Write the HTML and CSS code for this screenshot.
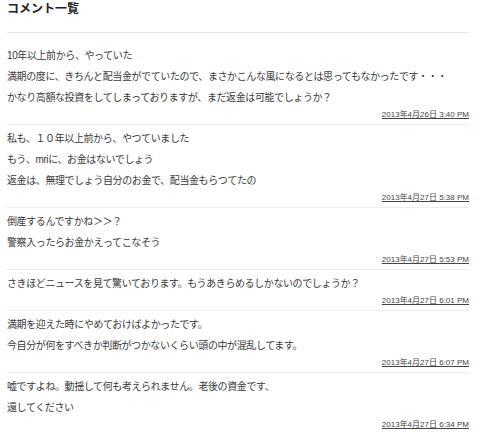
FILE: index.html
```html
<!DOCTYPE html>
<html lang="ja">

<head>
    <meta charset="UTF-8">
    <meta name="viewport" content="width=device-width, initial-scale=1.0">
    <title>コメント一覧</title>
    <link rel="stylesheet" href="styles.css">
</head>

<body>
    <div class="comments">
        <h3 class="comments-title">コメント一覧</h3>

        <div class="comment-list">
            <div class="comment">
                <p>10年以上前から、やっていた<br>
                    満期の度に、きちんと配当金がでていたので、まさかこんな風になるとは思ってもなかったです・・・<br>
                    かなり高額な投資をしてしまっておりますが、まだ返金は可能でしょうか？</p>
                <div class="comment-date"><a href="#">2013年4月26日 3:40 PM</a></div>
            </div>

            <div class="comment">
                <p>私も、１０年以上前から、やつていました<br>
                    もう、mriに、お金はないでしょう<br>
                    返金は、無理でしょう自分のお金で、配当金もらつてたの</p>
                <div class="comment-date"><a href="#">2013年4月27日 5:38 PM</a></div>
            </div>

            <div class="comment">
                <p>倒産するんですかね＞＞？<br>
                    警察入ったらお金かえってこなそう</p>
                <div class="comment-date"><a href="#">2013年4月27日 5:53 PM</a></div>
            </div>

            <div class="comment">
                <p>さきほどニュースを見て驚いております。もうあきらめるしかないのでしょうか？</p>
                <div class="comment-date"><a href="#">2013年4月27日 6:01 PM</a></div>
            </div>

            <div class="comment">
                <p>満期を迎えた時にやめておけばよかったです。<br>
                    今自分が何をすべきか判断がつかないくらい頭の中が混乱してます。</p>
                <div class="comment-date"><a href="#">2013年4月27日 6:07 PM</a></div>
            </div>

            <div class="comment">
                <p>嘘ですよね。動揺して何も考えられません。老後の資金です、<br>
                    還してください</p>
                <div class="comment-date"><a href="#">2013年4月27日 6:34 PM</a></div>
            </div>
        </div>
    </div>
</body>

</html>
```

FILE: styles.css
```css
body {
    margin: 0;
    padding: 0;
    background-color: #fff;
    font-family: "Liberation Sans", Arial, "Noto Sans CJK JP", sans-serif;
    color: #3a3a3a;
}

.comments {
    width: 462px;
    padding: 0 11px 0 7px;
}

.comments-title {
    margin: 0;
    padding: 3px 0 16px 0;
    font-size: 12px;
    line-height: 13px;
    font-weight: bold;
    color: #222;
    border-bottom: 1px solid #e8e8e8;
}

.comment-list {
    margin-top: 9px;
}

.comment {
    padding: 3px 0 3px 0;
    border-bottom: 1px solid #ececec;
}

.comment p {
    margin: 0;
    font-size: 10px;
    line-height: 21px;
    letter-spacing: -0.4px;
}

.comment-date {
    margin-top: 1px;
    text-align: right;
    font-size: 8px;
    line-height: 12px;
}

.comment-date a {
    color: #444;
    text-decoration: underline;
}
```
